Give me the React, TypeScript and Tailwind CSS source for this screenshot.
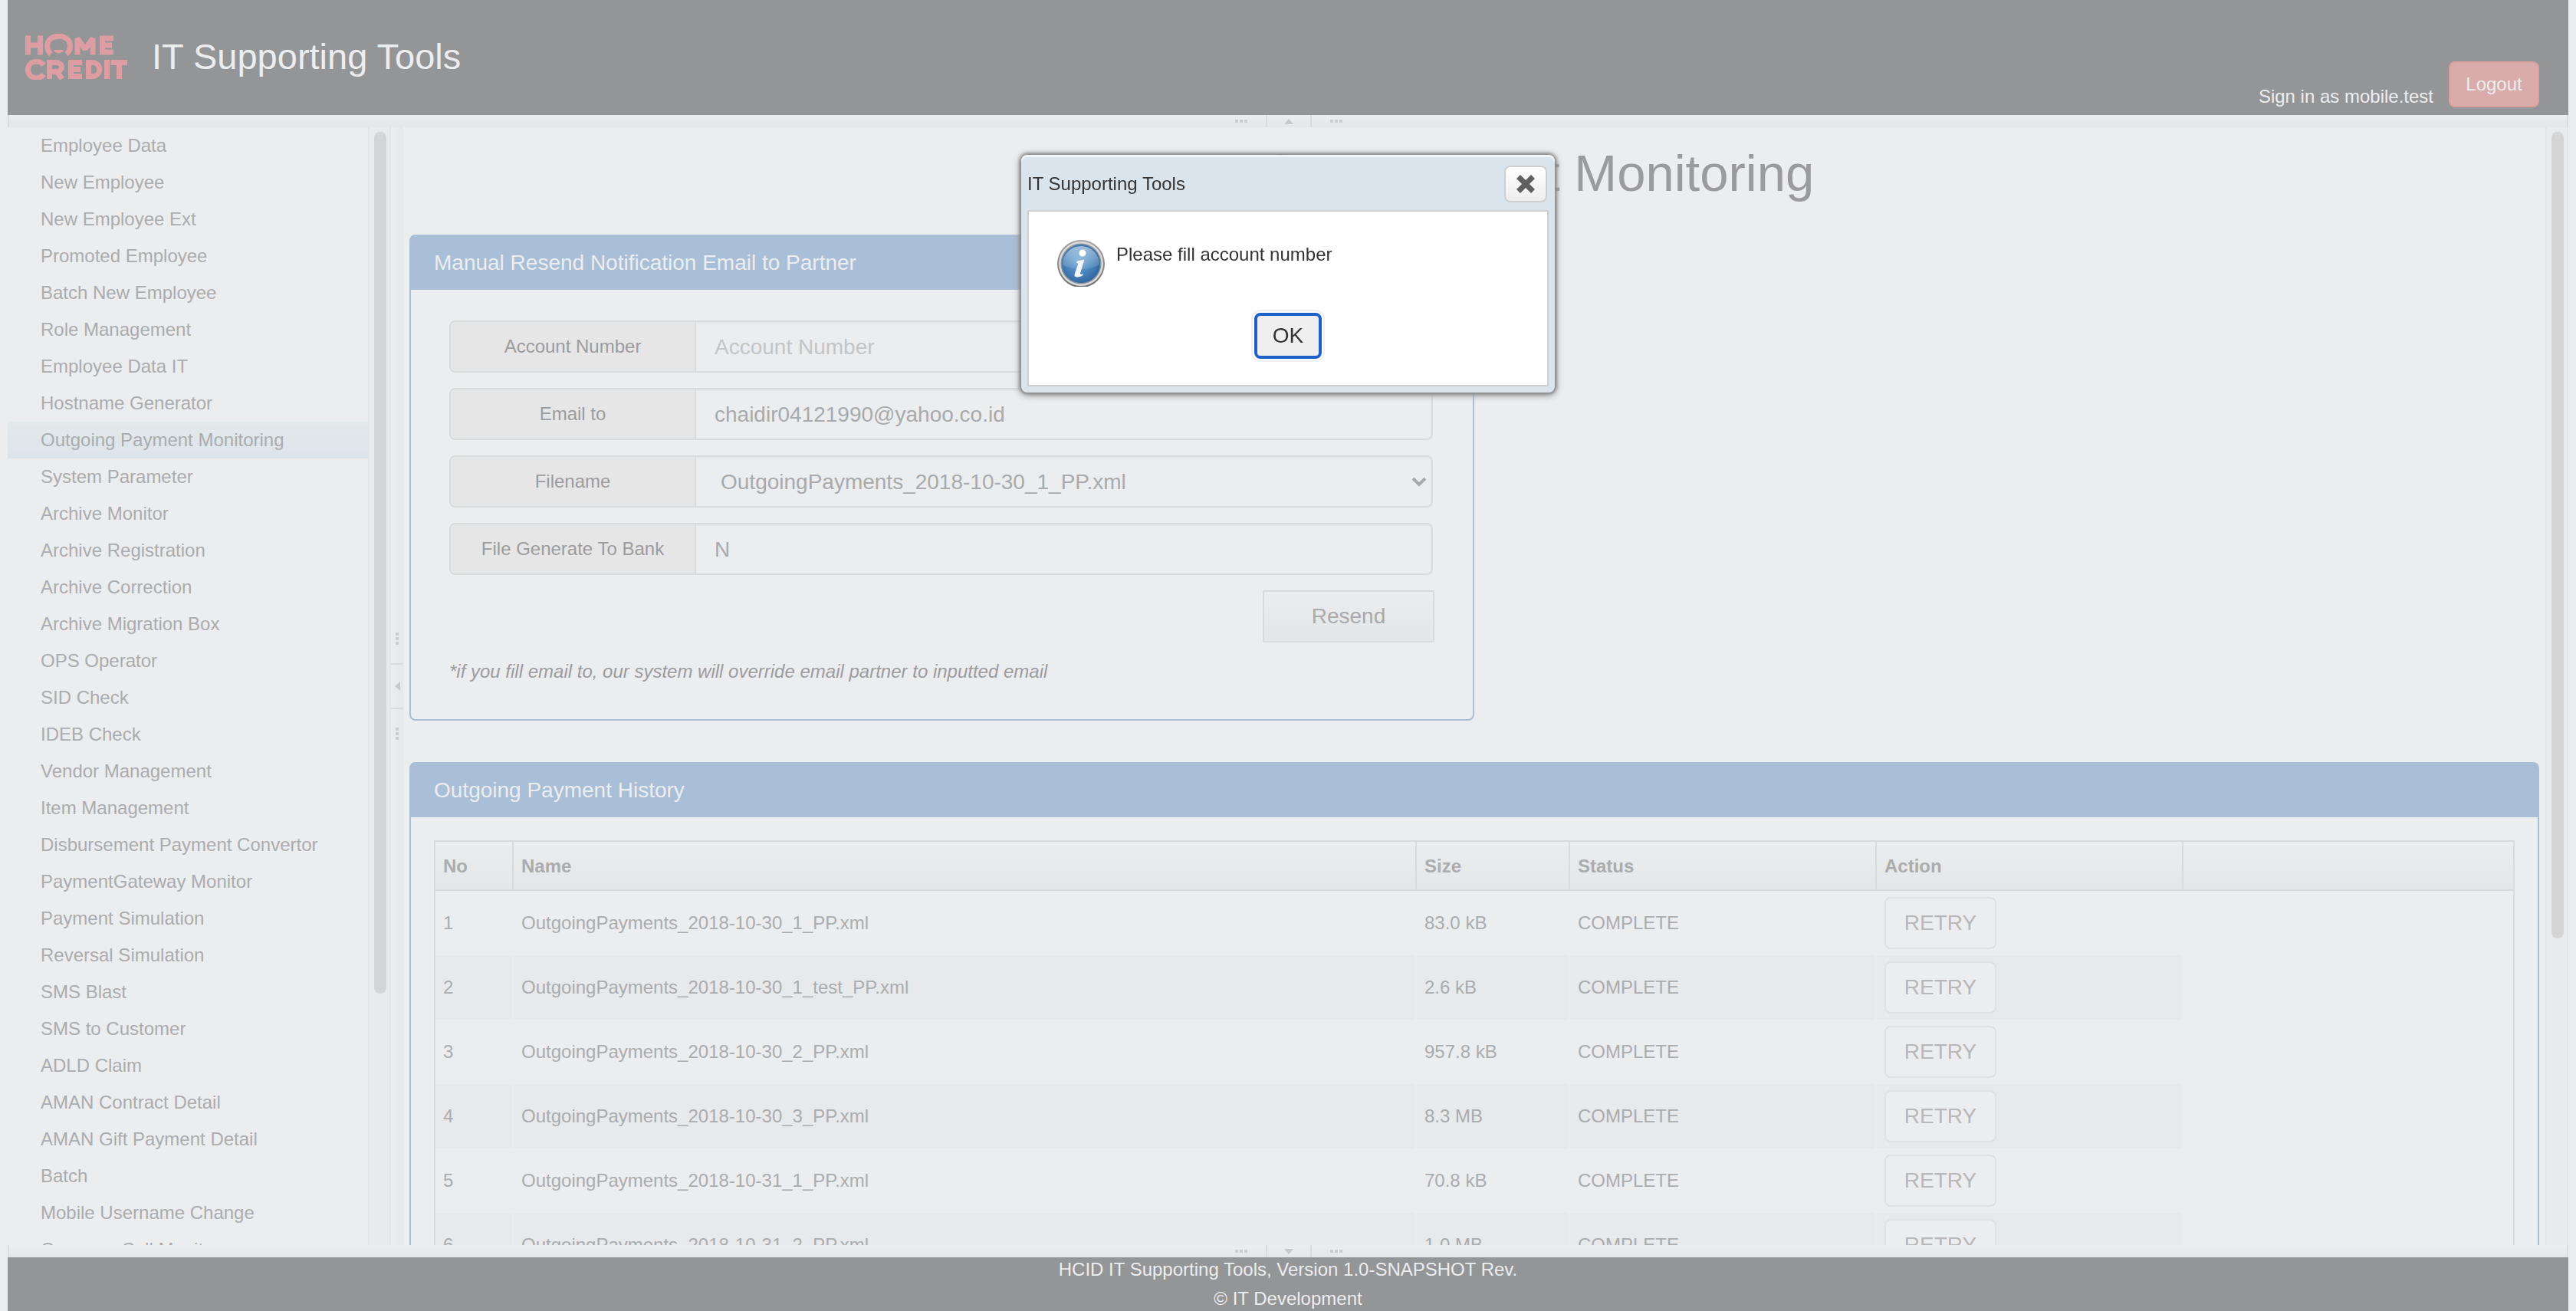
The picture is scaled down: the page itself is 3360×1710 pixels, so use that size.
import React from "react";

const MENU = [
  "Employee Data", "New Employee", "New Employee Ext", "Promoted Employee", "Batch New Employee",
  "Role Management", "Employee Data IT", "Hostname Generator", "Outgoing Payment Monitoring",
  "System Parameter", "Archive Monitor", "Archive Registration", "Archive Correction",
  "Archive Migration Box", "OPS Operator", "SID Check", "IDEB Check", "Vendor Management",
  "Item Management", "Disbursement Payment Convertor", "PaymentGateway Monitor",
  "Payment Simulation", "Reversal Simulation", "SMS Blast", "SMS to Customer", "ADLD Claim",
  "AMAN Contract Detail", "AMAN Gift Payment Detail", "Batch", "Mobile Username Change",
  "Cameron Call Monitor",
];

const ROWS = [
  ["1", "OutgoingPayments_2018-10-30_1_PP.xml", "83.0 kB", "COMPLETE"],
  ["2", "OutgoingPayments_2018-10-30_1_test_PP.xml", "2.6 kB", "COMPLETE"],
  ["3", "OutgoingPayments_2018-10-30_2_PP.xml", "957.8 kB", "COMPLETE"],
  ["4", "OutgoingPayments_2018-10-30_3_PP.xml", "8.3 MB", "COMPLETE"],
  ["5", "OutgoingPayments_2018-10-31_1_PP.xml", "70.8 kB", "COMPLETE"],
  ["6", "OutgoingPayments_2018-10-31_2_PP.xml", "1.0 MB", "COMPLETE"],
];

function Logo() {
  return (
    <svg width="134" height="60" viewBox="0 0 134 60" role="img" aria-label="Home Credit" className="shrink-0" fill="none" stroke="#dd9da2" strokeWidth="7">
      <path d="M4.500 2.500V27.500M20.500 2.500V27.500M4.500 15H20.500" />
      <path d="M34.500 26.500C28 21 28 11 34 6.500C40 2 50 2 55 6.500C61 11 61 21 54.500 26.500" />
      <path d="M38 21H51C50 27 39 27 38 21Z" fill="#dd9da2" stroke="none" />
      <path d="M69 27.500V6L79 20L89 6V27.500" strokeLinejoin="bevel" />
      <path d="M116 6H101.500V24H116M101.500 15H114" />
      <path d="M25 41C20 33.500 4.500 35 4.500 47C4.500 59 20 60.500 25 53" />
      <path d="M32.500 59V37.500H41C51 37.500 51 49.500 41 49.500H32.500M42 49L49 59" />
      <path d="M75 37.500H60.500V55.500H75M60.500 46.500H73" />
      <path d="M83.500 37.500V55.500H88C101 55.500 101 37.500 88 37.500Z" />
      <path d="M107.500 34V59M112.500 37.500H134M123.500 37.500V59" />
    </svg>
  );
}

function Dots({ vertical = false }: { vertical?: boolean }) {
  return (
    <span className={vertical ? "flex flex-col gap-0.5" : "flex gap-0.5"}>
      <i className="size-1 rounded-[1px] bg-[#cbcccd]" />
      <i className="size-1 rounded-[1px] bg-[#cbcccd]" />
      <i className="size-1 rounded-[1px] bg-[#cbcccd]" />
    </span>
  );
}

function HorizontalSplitter({ down = false }: { down?: boolean }) {
  return (
    <div className="flex h-4 shrink-0 items-center justify-center gap-6 border-x-2 border-[#dadbdd] bg-linear-to-b from-[#ecedee] to-[#e5e6e7] pl-0.5">
      <Dots />
      <button type="button" aria-label={down ? "Collapse footer" : "Collapse header"} className="flex h-4 w-[60px] items-center justify-center border-x-2 border-[#dadbdd]">
        <svg width="12" height="7" viewBox="0 0 12 7" fill="#c8c9ca"><path d={down ? "M0 0H12L6 7Z" : "M6 0L12 7H0Z"} /></svg>
      </button>
      <Dots />
    </div>
  );
}

function VerticalSplitter() {
  return (
    <div className="flex w-4 shrink-0 flex-col items-center justify-center gap-6 bg-linear-to-r from-[#ecedee] to-[#e6e7e8]">
      <Dots vertical />
      <button type="button" aria-label="Collapse menu" className="flex h-[60px] w-4 items-center justify-center border-y-2 border-[#dadbdd]">
        <svg width="7" height="12" viewBox="0 0 7 12" fill="#c8c9ca"><path d="M7 0V12L0 6Z" /></svg>
      </button>
      <Dots vertical />
    </div>
  );
}

function ScrollTrack({ thumb }: { thumb: string }) {
  return (
    <div aria-hidden="true" className="w-[30px] shrink-0 border-x-2 border-[#e3e4e6] bg-[#e9eaec] px-1.5 py-1.5">
      <div className={`w-4 rounded-full bg-[#d4d4d4] ${thumb}`} />
    </div>
  );
}

function Panel({ title, className, children }: { title: string; className: string; children: React.ReactNode }) {
  return (
    <section className={`rounded-lg border-2 border-[#a9bed7] ${className}`}>
      <h2 className="bg-[#a9bed7] px-[30px] pt-[19px] pb-[19px] text-[28px] leading-8 text-[#ecedef]">{title}</h2>
      {children}
    </section>
  );
}

function Field({ id, label, children }: { id: string; label: string; children: React.ReactNode }) {
  return (
    <div className="mb-5 flex h-[68px] rounded-lg border-2 border-[#d9dadb]">
      <label htmlFor={id} className="flex w-[320px] shrink-0 items-center justify-center rounded-l-md border-r-2 border-[#d9dadb] bg-[#e6e6e6] text-[24px] text-[#9c9c9e]">
        {label}
      </label>
      {children}
    </div>
  );
}

const INPUT = "min-w-0 grow rounded-r-md bg-transparent px-6 pt-0.5 text-[28px] text-[#a9aaab] shadow-[inset_0_2px_2px_#e5e6e7] outline-none placeholder:text-[#c4c5c6]";
const HEAD = "border-r-2 border-b-2 border-[#d9dadc] px-2.5 pt-0.5 text-left font-bold";

function Dialog() {
  return (
    <div role="dialog" aria-labelledby="dialog-title" className="fixed top-[202px] left-1/2 w-[696px] -translate-x-1/2 rounded-lg bg-[#dae4ed] px-2 pb-2 text-[24px] text-[#333] shadow-[0_0_4px_2px_#808080,0_2px_10px_2px_#a0a0a0,inset_0_3px_1px_#f2f6f9]">
      <div className="flex h-[72px] items-center justify-between pt-2 pr-0.5 pb-1">
        <h2 id="dialog-title">IT Supporting Tools</h2>
        <button type="button" aria-label="Close" className="flex h-12 w-14 items-center justify-center rounded-lg border-2 border-[#cfcfcf] bg-linear-to-b from-white to-[#ededed]">
          <svg width="26" height="24" viewBox="0 0 26 24" stroke="#606060" strokeWidth="7"><path d="M3.500 2.500L22.500 21.500M22.500 2.500L3.500 21.500" /></svg>
        </button>
      </div>
      <div className="flex h-[230px] flex-col items-center justify-between border-2 border-[#cfcfcf] bg-white pt-9 pb-[34px]">
        <div className="flex w-full gap-3.5 pl-9">
          <svg width="64" height="62" viewBox="0 1 64 62" className="shrink-0">
            <defs>
              <linearGradient id="rim" x1="0" y1="0" x2="0" y2="1">
                <stop offset="0" stopColor="#a8a8a8" /><stop offset="1" stopColor="#6f6f6f" />
              </linearGradient>
              <radialGradient id="ball" cx="0.45" cy="0.45" r="0.6">
                <stop offset="0" stopColor="#6ba3d3" /><stop offset="0.6" stopColor="#4581b9" /><stop offset="1" stopColor="#2d619c" />
              </radialGradient>
              <linearGradient id="gloss" x1="0" y1="0" x2="0" y2="1">
                <stop offset="0" stopColor="#fff" stopOpacity="0.5" /><stop offset="1" stopColor="#fff" stopOpacity="0.08" />
              </linearGradient>
            </defs>
            <circle cx="32" cy="33" r="31" fill="url(#rim)" />
            <circle cx="32" cy="33" r="29" fill="#dadada" />
            <circle cx="32" cy="33" r="26.500" fill="#8a9099" />
            <circle cx="32" cy="33" r="25" fill="url(#ball)" />
            <path d="M8 34A24 24 0 0 1 56 34C46 42 18 42 8 34Z" fill="url(#gloss)" />
            <circle cx="34" cy="19" r="4.500" fill="#fff" />
            <path d="M27 29.500L36.500 27.500L31 45.500Q31 47.500 35 46L33.500 49Q21.500 53 24 45.500L28.500 32.500L26 32Z" fill="#f3f5f7" />
          </svg>
          <p className="pt-1 leading-8">Please fill account number</p>
        </div>
        <button type="button" className="h-[60px] w-[88px] rounded-lg border-4 border-[#2061c9] bg-[#efefef] text-[28px] shadow-[0_0_0_2px_#fff,0_0_0_4px_#f0f0f0]">OK</button>
      </div>
    </div>
  );
}

export default function App() {
  return (
    <div className="flex h-screen flex-col bg-[#ecedef] px-2.5 font-['Liberation_Sans',Arial,sans-serif] text-[24px] text-[#abacad]">
      <header className="flex h-[150px] shrink-0 items-end justify-between bg-[#949596] pr-[38px] pb-2.5 pl-[22px] text-[#ecedef]">
        <div className="flex items-center gap-8 pb-8">
          <Logo />
          <h1 className="text-[47px] leading-[68px]">IT Supporting Tools</h1>
        </div>
        <div className="flex items-end gap-5">
          <span className="leading-7">Sign in as mobile.test</span>
          <button type="button" className="h-[60px] w-[118px] rounded-lg border-2 border-[#d8a19d] bg-[#d9abab]">Logout</button>
        </div>
      </header>
      <HorizontalSplitter />

      <div className="flex min-h-0 grow">
        <nav className="w-[470px] shrink-0 overflow-hidden">
          {MENU.map((item) => (
            <a
              key={item}
              href="#"
              className={`block h-12 pl-[43px] leading-[48px] whitespace-nowrap ${item === "Outgoing Payment Monitoring" ? "bg-linear-to-b from-[#e4e9ea] to-[#dce4ec]" : ""}`}
            >
              {item}
            </a>
          ))}
        </nav>
        <ScrollTrack thumb="h-[1124px]" />
        <VerticalSplitter />

        <main className="min-w-0 grow overflow-hidden px-2">
          <h1 className="h-[140px] pt-6 text-center text-[67px] leading-[72px] text-[#9b9b9d]">Outgoing Payment Monitoring</h1>

          <Panel title="Manual Resend Notification Email to Partner" className="h-[634px] w-1/2">
            <form className="pt-10 pr-[52px] pl-[50px]" onSubmit={(e) => e.preventDefault()}>
              <Field id="account" label="Account Number">
                <input id="account" placeholder="Account Number" className={INPUT} />
              </Field>
              <Field id="email" label="Email to">
                <input id="email" defaultValue="chaidir04121990@yahoo.co.id" className={INPUT} />
              </Field>
              <Field id="filename" label="Filename">
                <div className="relative flex min-w-0 grow">
                  <select id="filename" className={`${INPUT} appearance-none pl-8`}>
                    <option>OutgoingPayments_2018-10-30_1_PP.xml</option>
                  </select>
                  <svg width="20" height="14" viewBox="0 0 20 14" fill="none" stroke="#a9aaab" strokeWidth="4" className="pointer-events-none absolute top-[26px] right-1.5">
                    <path d="M2 2L10 10L18 2" />
                  </svg>
                </div>
              </Field>
              <Field id="generate" label="File Generate To Bank">
                <input id="generate" defaultValue="N" className={INPUT} />
              </Field>
              <div className="-mr-0.5 flex justify-end">
                <button type="submit" className="h-[68px] w-[224px] border-2 border-[#d9dadb] bg-linear-to-b from-[#ecedee] to-[#e4e5e7] text-[28px] text-[#a9aaab]">Resend</button>
              </div>
              <p className="pt-6 leading-7 text-[#9c9c9e] italic">*if you fill email to, our system will override email partner to inputted email</p>
            </form>
          </Panel>

          <Panel title="Outgoing Payment History" className="mt-[54px] h-[1200px]">
            <div className="mx-[30px] mt-[30px] h-full border-2 border-[#d9dadc]">
              <table className="w-full table-fixed border-separate border-spacing-0">
                <colgroup>
                  <col className="w-[102px]" />
                  <col />
                  <col className="w-[200px]" />
                  <col className="w-[400px]" />
                  <col className="w-[400px]" />
                  <col className="w-[430px]" />
                </colgroup>
                <thead>
                  <tr className="h-16 bg-linear-to-b from-[#ecedee] to-[#e5e6e8]">
                    <th className={HEAD}>No</th>
                    <th className={HEAD}>Name</th>
                    <th className={HEAD}>Size</th>
                    <th className={HEAD}>Status</th>
                    <th className={HEAD}>Action</th>
                    <td className="border-b-2 border-[#d9dadc]" />
                  </tr>
                </thead>
                <tbody>
                  {ROWS.map((row, i) => {
                    const cell = i % 2 ? "border-r-2 border-[#ecedee] bg-[#e8e9eb] px-2.5" : "border-r-2 border-transparent px-2.5";
                    return (
                      <tr key={row[0]} className="h-[84px]">
                        {row.map((value, c) => <td key={c} className={cell}>{value}</td>)}
                        <td className={cell}>
                          <button type="button" className="block h-[68px] w-[146px] rounded-lg border-2 border-[#dfe0e1] bg-[#ecedef] text-[28px] text-[#b8b8b9]">RETRY</button>
                        </td>
                        <td />
                      </tr>
                    );
                  })}
                </tbody>
              </table>
            </div>
          </Panel>
        </main>
        <ScrollTrack thumb="h-[1052px]" />
      </div>

      <HorizontalSplitter down />
      <footer className="h-[70px] shrink-0 overflow-hidden bg-[#949596] text-center leading-[38px] text-[#ecedef]">
        <p className="-mt-[3px]">HCID IT Supporting Tools, Version 1.0-SNAPSHOT Rev.</p>
        <p>© IT Development</p>
      </footer>
      <Dialog />
    </div>
  );
}
